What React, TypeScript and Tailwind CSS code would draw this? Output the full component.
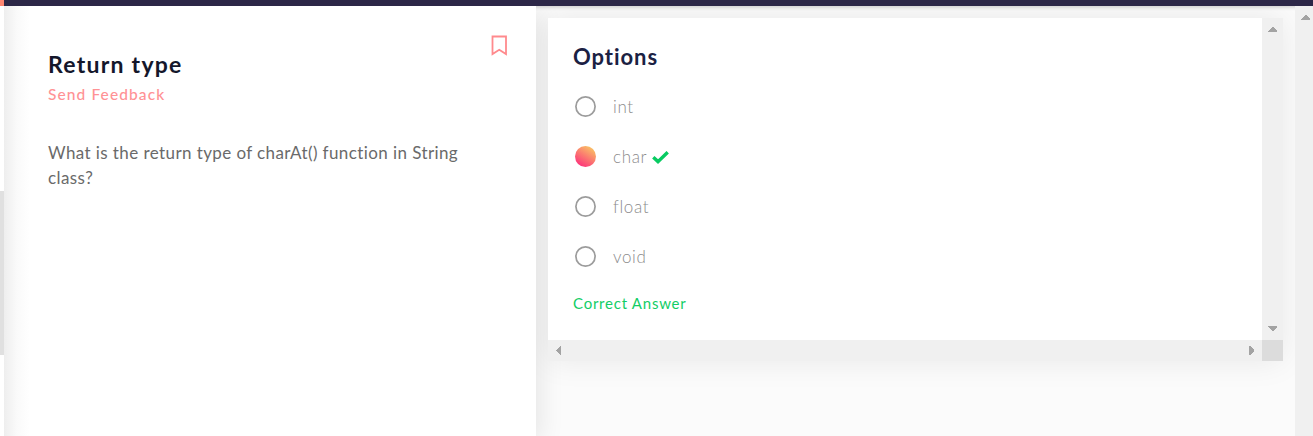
import React, { useState } from "react";

const options = ["int", "char", "float", "void"];
const correct = "char";

type Direction = "up" | "down" | "left" | "right";

const arrowPaths: Record<Direction, string> = {
  up: "M0 5H9V4L5 0H4L0 4Z",
  down: "M0 0H9V1L5 5H4L0 1Z",
  left: "M5 0V9H4L0 5V4L4 0Z",
  right: "M0 0V9H1L5 5V4L1 0Z",
};

function Arrow({ direction }: { direction: Direction }) {
  const vertical = direction === "up" || direction === "down";
  const width = vertical ? 9 : 5;
  const height = vertical ? 5 : 9;
  return (
    <svg width={width} height={height} viewBox={`0 0 ${width} ${height}`} fill="#a3a3a3" shapeRendering="crispEdges">
      <path d={arrowPaths[direction]} />
    </svg>
  );
}

function ProblemPanel() {
  return (
    <section className="relative z-10 w-[532px] shrink-0 bg-white pl-11 pt-[44px] shadow-[4px_6px_24px_rgba(0,0,0,0.09)]">
      <div className="absolute inset-y-0 left-0 w-[26px] bg-gradient-to-r from-[#eeeeee] via-[#fafafa] to-white" />
      <button aria-label="Bookmark" className="absolute left-[487px] top-[29px]">
        <svg width="17" height="21" viewBox="0 0 17 21" fill="none" stroke="#ff8a8d" strokeWidth="1.8">
          <path d="M1.5 1.5H15V19L8.25 14.7L1.5 19Z" />
        </svg>
      </button>
      <h1 className="relative h-7 whitespace-nowrap text-[23px] font-bold leading-7 tracking-[1.25px] text-[#14172b]">Return type</h1>
      <a className="relative mt-[6px] block h-5 w-fit whitespace-nowrap text-[15.5px] font-medium leading-5 tracking-[1.1px] text-[#ff9295]">
        Send Feedback
      </a>
      <p className="relative mt-[36px] w-[440px] text-[17px] leading-[25px] tracking-[0.41px] text-[#6a6a6a]">
        What is the return type of charAt() function in String
        <br />
        class?
      </p>
    </section>
  );
}

function OptionsCard() {
  const [selected, setSelected] = useState(correct);
  return (
    <section className="relative z-10 grid h-[343px] w-[735px] grid-cols-[714px_21px] grid-rows-[322px_21px]">
      <div className="bg-white pl-[25px] pt-[25px]">
        <h2 className="h-7 text-[22px] font-bold leading-7 tracking-[0.95px] text-[#1b2143]">Options</h2>
        <div className="mt-[10px]">
          {options.map((option) => (
            <label key={option} className="flex h-[50px] w-fit items-center pl-[2px]">
              <input type="radio" className="sr-only" name="answer" checked={selected === option} onChange={() => setSelected(option)} />
              {selected === option ? (
                <span className="h-[21px] w-[21px] rounded-full bg-[linear-gradient(32deg,#fd267d_5%,#f9ce63_95%)]" />
              ) : (
                <svg width="21" height="21" viewBox="0 0 21 21" fill="none" stroke="#9c9c9c" strokeWidth="1.7">
                  <circle cx="10.5" cy="10.5" r="9.6" />
                </svg>
              )}
              <span className="ml-[17px] mt-[2px] text-[17px] font-light leading-6 tracking-[0.65px] text-[#8c8c8c]">{option}</span>
              {option === correct && (
                <svg className="ml-[5px] mt-[2px]" width="17" height="13" viewBox="0 0 17 13" fill="none" stroke="#08cb62" strokeWidth="3.4">
                  <path d="M1.3 6.2L6 10.6L15.7 1.2" />
                </svg>
              )}
            </label>
          ))}
        </div>
        <p className="mt-[12px] text-[15px] leading-5 tracking-[0.76px] text-[#12cd66]">Correct Answer</p>
      </div>
      <div className="flex flex-col items-center justify-between bg-[#f0f0f0] pb-[9px] pt-[9px]">
        <Arrow direction="up" />
        <Arrow direction="down" />
      </div>
      <div className="flex items-center justify-between bg-[#f0f0f0] px-2">
        <Arrow direction="left" />
        <Arrow direction="right" />
      </div>
      <div className="bg-[#dcdcdc]" />
    </section>
  );
}

export default function App() {
  return (
    <div className="flex h-[436px] w-[1313px] flex-col overflow-hidden bg-[#fbfbfb] font-['Lato','Noto_Sans',sans-serif]">
      <header className="relative z-10 flex h-[6px] shrink-0 bg-[#2c2747] shadow-[0_1px_4px_rgba(0,0,0,0.2)]">
        <div className="h-full w-1 bg-[#ff8671]" />
      </header>
      <main className="flex min-h-0 flex-1 overflow-hidden">
        <div className="relative z-20 w-1 shrink-0 bg-white pt-[185px]">
          <div className="h-[164px] bg-[#e0e0e0]" />
        </div>
        <ProblemPanel />
        <div className="flex-1 pl-3 pt-3">
          <div className="h-[343px] w-[735px] shadow-[0_0_30px_rgba(0,0,0,0.08)]">
            <OptionsCard />
          </div>
        </div>
        <div className="relative z-20 flex w-[18px] justify-center bg-[#f0f0f0] pl-[3px] pt-[9px]">
          <Arrow direction="up" />
        </div>
      </main>
    </div>
  );
}
